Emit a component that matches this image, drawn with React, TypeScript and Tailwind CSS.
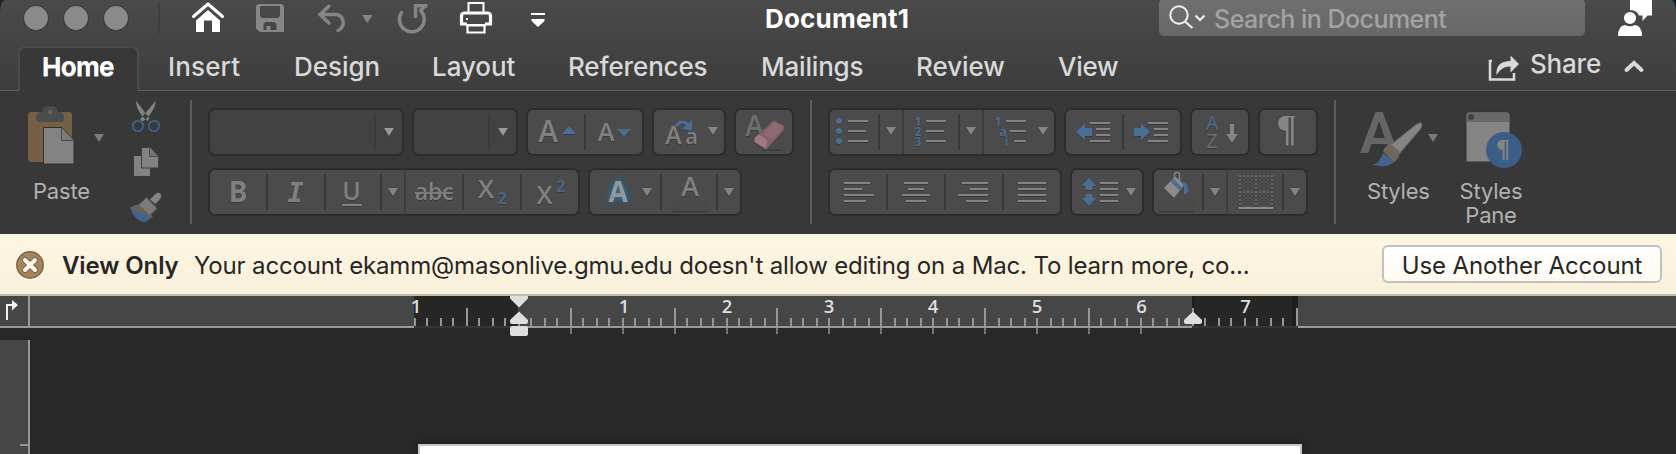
import React, { Fragment, type ReactNode } from "react";

/* Every icon is drawn in window coordinates: the viewBox is the icon's own rectangle. */
function Ico({ x, y, w, h, c = "", children }: { x: number; y: number; w: number; h: number; c?: string; children?: ReactNode }) {
  return (
    <svg width={w} height={h} viewBox={`${x} ${y} ${w} ${h}`} className={`block shrink-0 overflow-visible ${c}`} aria-hidden="true">
      {children}
    </svg>
  );
}

const Tri = ({ x, y = 131, f = "#858585" }: { x: number; y?: number; f?: string }) => (
  <path d={`M${x - 5} ${y - 4}h10l-5 8z`} fill={f} />
);

const Lines = ({ l }: { l: [number, number, number][] }) => (
  <path d={l.map(([a, b, y]) => `M${a} ${y}H${b}`).join("")} stroke="#838383" strokeWidth="2" />
);

type GlyphProps = { x: number; y: number; s: number; children: string; f?: string; w?: number; family?: string; i?: boolean };
const Glyph = ({ x, y, s, children, f = "#808080", w = 600, family = '"Open Sans", "Noto Sans", sans-serif', i }: GlyphProps) => (
  <text x={x} y={y} fontSize={s} fill={f} fontWeight={w} fontFamily={family} textAnchor="middle" fontStyle={i ? "italic" : "normal"}>
    {children}
  </text>
);

type CellDef = { w: number; sep?: "short" | "full"; art?: ReactNode };

function Group({ x, y, cells, field = false }: { x: number; y: number; cells: CellDef[]; field?: boolean }) {
  let cursor = x;
  return (
    <div className={`flex h-12 items-center rounded-[7px] border-2 border-[#2d2d2d] ${field ? "bg-[#424242]" : "bg-[#4b4b4b]"}`}>
      {cells.map((cell, i) => {
        const at = cursor;
        cursor += cell.w;
        return (
          <Fragment key={i}>
            <Ico x={at} y={y} w={cell.sep ? cell.w - 2 : cell.w} h={44} c="drop-shadow-[0_1px_0_rgba(0,0,0,0.22)]">
              {cell.art}
            </Ico>
            {cell.sep === "short" && <div className="h-9 w-0.5 bg-[#3a3a3a]" />}
            {cell.sep === "full" && <div className="h-11 w-0.5 bg-[#3d3d3d]" />}
          </Fragment>
        );
      })}
    </div>
  );
}

const BLUE = "#4a6d93";
const R1 = 110;
const R2 = 170;
const Divider = () => <div className="mt-[9px] h-[124px] w-0.5 shrink-0 bg-[#5e5e5e]" />;

function TitleBar() {
  return (
    <div className="flex h-[46px] items-start">
      <Ico x={0} y={0} w={160} h={46}>
        {[36, 76, 116].map((cx) => (
          <circle key={cx} cx={cx} cy="18" r="12.5" fill="#8a8a8a" stroke="#3b3b3b" strokeWidth="1.2" />
        ))}
        <path d="M159 2v32" stroke="#3d3d3d" strokeWidth="1.5" />
      </Ico>
      <Ico x={160} y={0} w={400} h={46}>
        <path d="M193.500 16.500L208 4l14.500 12.500" fill="none" stroke="#fff" strokeWidth="3" strokeLinecap="round" strokeLinejoin="round" />
        <path d="M196 20.500L208 10l12 10.500V32h-8V20.500h-8V32h-8z" fill="#fff" />
        <path d="M258 4H282l2 2V32H260l-4-3.500V6z M260 6v10l2 2h16l2-2V6z M265.500 22l-2 2v6h3v-4h4v4h6v-6l-2-2z" fill="#868686" fillRule="evenodd" />
        <path d="M329 6L320 14.500 329 23M320 14.500h17a8.500 8.500 0 0 1 1 16" fill="none" stroke="#858585" strokeWidth="3.500" strokeLinecap="round" />
        <path d="M362 15h10.500l-5.250 8z" fill="#858585" />
        <path d="M401.500 12.500a12.400 12.400 0 1 0 19-2L424.500 6.500" fill="none" stroke="#858585" strokeWidth="3.500" strokeLinecap="round" strokeLinejoin="round" />
        <path d="M415.500 18V5.800H427.500" fill="none" stroke="#858585" strokeWidth="3.400" />
        <g fill="none" stroke="#fff">
          <path d="M468.500 13V3h15v10" strokeWidth="2" />
          <path d="M467 24h-5.500V16q0-3 3-3h23q3 0 3 3v8H485" strokeWidth="3.200" />
          <path d="M467.500 25h17v7.500h-17zM466 25.500h20" strokeWidth="2.200" />
        </g>
        <path d="M466 18h2v2h-2z" fill="#fff" />
        <path d="M531 13h14v2h-14zM531.500 19h13v2l-6.500 6-6.500-6z" fill="#fff" />
      </Ico>
      <div className="ml-[205px] w-[150px] whitespace-nowrap pt-[3px] text-[26px] font-bold leading-8 tracking-[0.200px] text-white">Document1</div>
      <div className="ml-[244px] flex h-9 w-[426px] items-center rounded-b-[5px] rounded-t-[3px] bg-gradient-to-b from-[#6f6f6f] to-[#676767]">
        <Ico x={1159} y={0} w={55} h={36}>
          <circle cx="1179" cy="15" r="8.700" fill="none" stroke="#f2f2f2" strokeWidth="2" />
          <path d="M1185 21.500l7.500 6.500" stroke="#f2f2f2" strokeWidth="2.200" />
          <path d="M1195.500 15.500l4.500 4.500 4.500-4.500" fill="none" stroke="#f2f2f2" strokeWidth="2.200" />
        </Ico>
        <span className="whitespace-nowrap pt-[4px] text-[25px] font-medium tracking-[-0.520px] text-[#a3a3a3]">Search in Document</span>
      </div>
      <Ico x={1585} y={0} w={91} h={46}>
        <path d="M1630 0h22v15.500h-4.500l-5 5.500v-5.500h-3.500a8 8 0 0 0-9-5z" fill="#fff" />
        <circle cx="1630" cy="18" r="6.800" fill="#fff" stroke="#484848" strokeWidth="1.500" />
        <path d="M1618 36q0-10 7-11 5 2.500 10 0 7 1 7 11z" fill="#fff" />
      </Ico>
    </div>
  );
}

function TabBar() {
  const tabs: [string, string][] = [
    ["Insert", "w-[126px] tracking-[0.150px]"],
    ["Design", "w-[138px] tracking-[-0.050px]"],
    ["Layout", "w-[136px] tracking-[-0.050px]"],
    ["References", "w-[193px] tracking-[-0.150px]"],
    ["Mailings", "w-[155px] tracking-[-0.200px]"],
    ["Review", "w-[142px] tracking-[-0.050px]"],
    ["View", "w-[99px] tracking-[-0.300px]"],
  ];
  return (
    <div className="flex h-[45px] text-[26px] font-medium leading-[42px] text-[#d9d9d9]">
      <div className="w-[18px] border-b border-[#606060]" />
      <div className="w-[121px] rounded-t-[7px] border-2 border-b-0 border-[#4b4b4b] bg-[#383838] pl-[22px] font-bold leading-[38px] tracking-[-0.700px] text-white [text-shadow:0_1px_0_#999]">
        Home
      </div>
      <div className="flex flex-1 whitespace-nowrap border-b border-[#606060] pl-[29px]">
        {tabs.map(([name, cls]) => (
          <div key={name} className={`shrink-0 ${cls}`}>{name}</div>
        ))}
        <Ico x={1157} y={46} w={373} h={44}>
          <path d="M1492 61h-2v18.500h24V73" fill="none" stroke="#dadada" strokeWidth="2.500" />
          <path d="M1496.500 75q-1-14 14-14v-5.500l8.500 8.500-8.500 8.500v-6q-9-.5-14 8.500z" fill="#dadada" />
        </Ico>
        <div className="w-[90px] leading-[36px] tracking-[-0.200px]">Share</div>
        <Ico x={1620} y={46} w={30} h={44}>
          <path d="M1626.500 70l7.500-7 7.500 7" fill="none" stroke="#d9d9d9" strokeWidth="4" strokeLinecap="round" />
        </Ico>
      </div>
    </div>
  );
}

function Ribbon() {
  return (
    <div className="flex h-[143px] bg-[#383838] text-[22px] leading-6 tracking-[-0.200px] text-[#b2b2b2]">
      <div className="flex w-[126px] flex-col">
        <Ico x={0} y={91} w={126} h={88}>
          <rect x="28" y="112" width="44" height="50" rx="3" fill="#755f45" />
          <path d="M36 118q0-6 5-6 2 0 2-3 2-3 7-3t7 3q0 3 2 3 5 0 5 6 0 4-3 4H39q-3 0-3-4z" fill="#4a4c4e" />
          <circle cx="50" cy="112" r="2.300" fill="#755f45" />
          <path d="M43.500 127.500H62l12 13V164H43.500z" fill="#838383" stroke="#303030" />
          <path d="M61.500 128v12.500H74" fill="#7b7b7b" stroke="#4b4b4b" />
          <Tri x={99} y={138} f="#7b7b7b" />
        </Ico>
        <span className="pl-[33px]">Paste</span>
      </div>
      <div className="w-[64px]">
        <Ico x={126} y={91} w={64} h={48}>
          <path d="M136 100.500l13.500 18-2 2.500-4.500-4q-7-8-7-16.500zM156 100.500l-16 19 3 2 5-4.500q7-8 8-16.500z" fill="#838383" />
          <circle cx="138" cy="126" r="5.200" fill="none" stroke="#3d5e88" strokeWidth="2" />
          <circle cx="154" cy="126" r="5.200" fill="none" stroke="#3d5e88" strokeWidth="2" />
        </Ico>
        <Ico x={126} y={139} w={64} h={48}>
          <path d="M134 156h16v20h-16z" fill="#828282" />
          <path d="M141.500 147.500h9l8 9V168h-17z" fill="#828282" stroke="#3e3e3e" />
          <path d="M149.500 148v8.500h8.500" fill="#757575" stroke="#4b4b4b" />
        </Ico>
        <Ico x={126} y={187} w={64} h={42}>
          <path d="M130 207.500l10-4 13 13-7.500 5.500q-10 0-15.500-14.500z" fill="#6d6157" />
          <path d="M130 207.500q6 5 16 7l3.500 4.500-5 3q-10-1-14.500-14.500z" fill="#3f638f" />
          <path d="M138.500 205l8-7.500 10.500 11-7.500 7z" fill="#7b7b7b" stroke="#5b5b5b" />
          <path d="M150 199.500l6-6q3-1.500 4.500.5t0 4.500l-5 5.500z" fill="#858585" />
        </Ico>
      </div>
      <Divider />
      <div className="ml-4 flex flex-col gap-3 pt-[17px]">
        <div className="flex gap-2">
          <Group field x={210} y={R1} cells={[{ w: 166, sep: "short" }, { w: 26, art: <Tri x={389} y={132} f="#9a9a9a" /> }]} />
          <Group field x={414} y={R1} cells={[{ w: 76, sep: "short" }, { w: 26, art: <Tri x={503} y={132} f="#9a9a9a" /> }]} />
          <Group x={528} y={R1} cells={[
            { w: 58, sep: "short", art: <><Glyph x={548} y={142} s={30}>A</Glyph><path d="M562 134l7-8 7 8z" fill={BLUE} /></> },
            { w: 56, art: <><Glyph x={606} y={141} s={25.500}>A</Glyph><path d="M617 129h14l-7 8z" fill={BLUE} /></> },
          ]} />
          <Group x={654} y={R1} cells={[
            { w: 70, art: <>
              <Glyph x={673.500} y={144} s={25}>A</Glyph><Glyph x={691.500} y={144} s={22}>a</Glyph>
              <path d="M676 126.500q7-8.500 12.500-.5" fill="none" stroke={BLUE} strokeWidth="3.200" />
              <path d="M692 120v11l-10-2z" fill={BLUE} /><Tri x={713} />
            </> },
          ]} />
          <Group x={736} y={R1} cells={[
            { w: 56, art: <>
              <Glyph x={754.500} y={135.500} s={28} f="#6f6f6c">A</Glyph>
              <path d="M762 149.500h19" stroke="#414141" strokeWidth="1" />
              <path d="M773.500 120.500l10.500 5.500v4L766.500 149.500l-12.500-7.500 1-4z" fill="#875f67" stroke="#70545a" />
              <path d="M774 121.500l9.500 5-11 14-9-6.500z" fill="#8b6a70" />
              <path d="M755 138l3.500-3.500 9 6-2 8-11-7z" fill="#9a7b80" />
            </> },
          ]} />
        </div>
        <div className="flex gap-2">
          <Group x={210} y={R2} cells={[
            { w: 58, sep: "short", art: <Glyph x={238} y={202} s={28} w={700}>B</Glyph> },
            { w: 58, sep: "short", art: <Glyph x={295.500} y={202} s={27} w={700} i family='"DejaVu Sans Mono", monospace'>I</Glyph> },
            { w: 56, sep: "short", art: <><Glyph x={351.500} y={200} s={25}>U</Glyph><path d="M342 205h20" stroke="#838383" strokeWidth="2" /></> },
            { w: 24, sep: "full", art: <Tri x={393} y={192} /> },
            { w: 58, sep: "short", art: <><Glyph x={434} y={200} s={23}>abc</Glyph><path d="M415 193h38" stroke="#7b7b7b" strokeWidth="2" /></> },
            { w: 58, sep: "short", art: <><Glyph x={486} y={198} s={26}>X</Glyph><Glyph x={502} y={204} s={16.500} f="#4b6586" w={700}>2</Glyph></> },
            { w: 56, art: <><Glyph x={544.500} y={204} s={26}>X</Glyph><Glyph x={560.500} y={192} s={16.500} f="#4b6586" w={700}>2</Glyph></> },
          ]} />
          <Group x={590} y={R2} cells={[
            { w: 72, sep: "short", art: <>
              <g className="drop-shadow-[0_0_3px_#2f6d9c]"><g className="drop-shadow-[0_0_2px_#2f6d9c]">
                <Glyph x={618} y={202} s={28} w={700} f="#979797">A</Glyph></g></g>
              <Tri x={647} y={192} />
            </> },
            { w: 56, sep: "short", art: <>
              <Glyph x={690} y={196} s={27}>A</Glyph>
              <rect x="672.500" y="201.500" width="35" height="9.500" rx="1" fill="#4a4a4a" stroke="#464646" />
            </> },
            { w: 22, art: <Tri x={729} y={192} /> },
          ]} />
        </div>
      </div>
      <div className="w-[16px]" />
      <Divider />
      <div className="ml-4 flex flex-col gap-3 pt-[17px]">
        <div className="flex gap-2">
          <Group x={830} y={R1} cells={[
            { w: 50, sep: "short", art: <>
              {[121, 131, 141].map((y) => <circle key={y} cx="839" cy={y} r="3" fill={BLUE} />)}
              <Lines l={[[848, 868, 121], [848, 866, 131], [848, 868, 141]]} />
            </> },
            { w: 24, sep: "full", art: <Tri x={891} /> },
            { w: 56, sep: "short", art: <>
              <Glyph x={918} y={126} s={11.500} f={BLUE} w={700}>1</Glyph>
              <Glyph x={918} y={136} s={11.500} f={BLUE} w={700}>2</Glyph>
              <Glyph x={918} y={146} s={11.500} f={BLUE} w={700}>3</Glyph>
              <Lines l={[[926, 946, 121], [926, 944, 131], [926, 946, 141]]} />
            </> },
            { w: 24, sep: "full", art: <Tri x={971} /> },
            { w: 70, art: <>
              <Glyph x={998} y={126} s={11.500} f={BLUE} w={700}>1</Glyph>
              <Glyph x={1003} y={136} s={13} f={BLUE} w={700}>a</Glyph>
              <Glyph x={1006.500} y={146} s={12} f={BLUE} w={700}>i</Glyph>
              <Lines l={[[1006, 1026, 121], [1010, 1026, 131], [1014, 1026, 141]]} />
              <Tri x={1043} />
            </> },
          ]} />
          <Group x={1066} y={R1} cells={[
            { w: 58, sep: "short", art: <>
              <path d="M1076 132l9-8.500v4.500h7v8h-7v4.500z" fill={BLUE} />
              <Lines l={[[1090, 1110, 123], [1096, 1110, 129], [1096, 1110, 135], [1090, 1110, 141]]} />
            </> },
            { w: 56, art: <>
              <path d="M1150 132l-9-8.500v4.500h-7v8h7v4.500z" fill={BLUE} />
              <Lines l={[[1148, 1168, 123], [1154, 1168, 129], [1154, 1168, 135], [1148, 1168, 141]]} />
            </> },
          ]} />
          <Group x={1192} y={R1} cells={[
            { w: 56, art: <>
              <Glyph x={1212} y={130} s={19.500} f={BLUE} w={500}>A</Glyph>
              <Glyph x={1212} y={148} s={19.500} f="#707070" w={500}>Z</Glyph>
              <path d="M1230 124h4v10h4l-6 9-6-9h4z" fill="#858585" />
            </> },
          ]} />
          <Group x={1260} y={R1} cells={[{ w: 56, art: <Glyph x={1286.500} y={141} s={38} w={700} f="#858585" family='"Liberation Serif", serif'>¶</Glyph> }]} />
        </div>
        <div className="flex gap-2">
          <Group x={830} y={R2} cells={[
            { w: 58, sep: "short", art: <Lines l={[[844, 870, 183], [844, 862, 189], [844, 874, 195], [844, 866, 201]]} /> },
            { w: 58, sep: "short", art: <Lines l={[[904, 928, 183], [908, 924, 189], [902, 930, 195], [906, 926, 201]]} /> },
            { w: 58, sep: "short", art: <Lines l={[[962, 988, 183], [970, 988, 189], [958, 988, 195], [966, 988, 201]]} /> },
            { w: 56, art: <Lines l={[[1018, 1046, 183], [1018, 1046, 189], [1018, 1046, 195], [1018, 1046, 201]]} /> },
          ]} />
          <Group x={1072} y={R2} cells={[
            { w: 70, art: <>
              <path d="M1089 178l7.500 8h-4v4h-7v-4h-4zM1089 206l7.500-8h-4v-4h-7v4h-4z" fill={BLUE} />
              <Lines l={[[1100, 1118, 183], [1100, 1118, 189], [1100, 1118, 195], [1100, 1118, 201]]} />
              <Tri x={1131} y={192} />
            </> },
          ]} />
          <Group x={1154} y={R2} cells={[
            { w: 50, sep: "short", art: <>
              <path d="M1164 188l11-11.500 9.500 8.500-10.500 13z" fill="#8b8b8b" />
              <path d="M1174.500 179v-4q0-2.500 2.500-2.500t2.500 2.500v6" fill="none" stroke="#858585" strokeWidth="1.500" />
              <path d="M1170.500 181.500l3-3 8.500 9-2.500 3z" fill={BLUE} />
              <path d="M1181 182q6-.5 7 5v5q-1 3-4 2.500v-8z" fill={BLUE} />
              <rect x="1158.500" y="201.500" width="35" height="9.500" rx="1" fill="#4a4a4a" stroke="#464646" />
            </> },
            { w: 24, sep: "full", art: <Tri x={1215} y={192} /> },
            { w: 56, sep: "short", art: <>
              <path d="M1239 176H1273M1239 192H1273M1240 179V206M1256 179V206M1272 179V206" stroke="#656565" strokeWidth="2" strokeDasharray="2 2" />
              <path d="M1239 208H1273" stroke="#8b8b8b" strokeWidth="2" />
            </> },
            { w: 22, art: <Tri x={1295} y={192} /> },
          ]} />
        </div>
      </div>
      <div className="w-[16px]" />
      <Divider />
      <div className="flex w-[110px] flex-col">
        <Ico x={1336} y={91} w={110} h={88}>
          <Glyph x={1379} y={152.500} s={58} f="#656563" w={600} family='Roboto, "Liberation Sans", sans-serif'>A</Glyph>
          <path d="M1421 123q2 2-1 6.500L1399 154l-9.500-8L1415 125.500q5-3.500 6-2.500z" fill="#858585" stroke="#6b6b6b" />
          <path d="M1383 151q3-7 9-5.500l7 5q2 6-5 12z" fill="#73675c" />
          <path d="M1372 164.500q6 0 8.500-6.500l3-5 11 9q-9 7-22.500 2.500z" fill="#42648d" />
          <Tri x={1433} y={138} f="#7b7b7b" />
        </Ico>
        <span className="pl-[31px]">Styles</span>
      </div>
      <div className="flex w-[90px] flex-col">
        <Ico x={1446} y={91} w={90} h={88}>
          <path d="M1466 162V115q0-3 3-3h38q3 0 3 3v47z" fill="#858585" stroke="#303030" />
          <path d="M1466.500 122V115q0-2.500 2.500-2.500h38q2.500 0 2.500 2.500v7z" fill="#686868" />
          <circle cx="1471" cy="117" r="3" fill="#414141" />
          <circle cx="1504" cy="150" r="18" fill="#3c5d85" />
          <Glyph x={1503} y={157} s={26} w={700} f="#858585" family='"Liberation Serif", serif'>¶</Glyph>
        </Ico>
        <span className="text-center">Styles<br />Pane</span>
      </div>
    </div>
  );
}

function Banner() {
  return (
    <div className="flex h-[62px] items-center whitespace-nowrap border-b-2 border-[#bfbda5] bg-gradient-to-b from-[#fff6e1] to-[#f9f0db] text-[24px] text-[#262626]">
      <Ico x={0} y={234} w={62} h={60}>
        <circle cx="30" cy="266.500" r="13.500" fill="#fff" />
        <circle cx="30" cy="265" r="13.200" fill="#a18460" stroke="#80643f" strokeWidth="1.500" />
        <path d="M25 260l10 10M35 260l-10 10" stroke="#80643f" strokeWidth="6" strokeLinecap="round" />
        <path d="M25 260l10 10M35 260l-10 10" stroke="#fffaf0" strokeWidth="4" strokeLinecap="round" />
      </Ico>
      <span className="w-[132px] pt-[3px] font-semibold tracking-[-0.100px]">View Only</span>
      <span className="w-[1188px] pt-[3px] tracking-[-0.150px]">Your account ekamm@masonlive.gmu.edu doesn't allow editing on a Mac. To learn more, co...</span>
      <button className="h-[38px] w-[280px] rounded-[6px] border-2 border-[#c1c1c1] bg-gradient-to-b from-white to-[#fffaf0] pt-[3px] leading-[31px] tracking-[-0.120px]">Use Another Account</button>
    </div>
  );
}

function Ruler() {
  const ticks = Array.from({ length: 69 }, (_, i) => ({ i, x: 2 * Math.round((414 + 12.96 * i) / 2) }));
  const inchCentres = [624, 727, 829, 933, 1037, 1141.5, 1245.5];
  return (
    <div className="flex h-[44px] bg-[#282828]">
      <Ico x={0} y={296} w={1676} h={44}>
        <path d="M0 296H1676V326H0z" fill="#464646" />
        <path d="M414 296H518V328H414zM1192 296H1298V328H1192z" fill="#262626" />
        <path d="M1192 296h3v30h-3zM1292 296h6v30h-6z" fill="#1e1e1e" />
        <path d="M414 327H518M1192 327H1298" stroke="#363636" strokeWidth="2" />
        <path d="M0 327H414M518 327H1192M1298 327H1676M29 296V327" stroke="#989898" strokeWidth="2" />
        {ticks.map(({ i, x }) => {
          const half = i % 8 === 4;
          const whole = i % 8 === 0;
          return (
            <Fragment key={i}>
              <rect x={x} y={half ? 308 : 318} width="2" height={half ? 18 : 8} fill="#97979b" />
              {(half || whole) && i > 8 && i < 60 && <rect x={x} y="328" width="2" height="6" fill="#77777a" />}
            </Fragment>
          );
        })}
        {inchCentres.map((cx, n) => (
          <Glyph key={n} x={cx} y={312.500} s={18.500} f="#dedede">{String(n + 1)}</Glyph>
        ))}
        <Glyph x={416} y={312.500} s={18.500} f="#dedede">1</Glyph>
        <path d="M510 296h18v2.500l-9 9-9-9zM519 311.500l9 8.500v2q0 2-2 2h-14q-2 0-2-2v-2z" fill="#dedede" />
        <rect x="510" y="326" width="18" height="10" rx="2" fill="#dedede" />
        <path d="M1193 311.500l9 8.500v2q0 2-2 2h-14q-2 0-2-2v-2z" fill="#dedede" />
        <path d="M7 320V305h7" fill="none" stroke="#f1f1f1" strokeWidth="2" />
        <path d="M12 300l6 5-6 5.500z" fill="#f1f1f1" />
      </Ico>
    </div>
  );
}

export default function App() {
  return (
    <div className="flex h-[454px] w-[1676px] flex-col overflow-hidden bg-[#14202b] font-['Inter','Liberation_Sans',sans-serif]">
      <header className="bg-gradient-to-b from-[#4a4a4a] to-[#3d3d3d] [border-top-left-radius:5px_12px] [border-top-right-radius:5px_12px]">
        <TitleBar />
        <TabBar />
      </header>
      <Ribbon />
      <Banner />
      <Ruler />
      <main className="flex flex-1 bg-[#282828]">
        <div className="flex w-[30px] justify-end border-r-2 border-[#989898] bg-[#464646] pt-[104px]">
          <div className="h-0.5 w-2 bg-[#989898]" />
        </div>
        <div className="ml-[388px] mt-[104px] h-[10px] w-[884px] border-2 border-b-0 border-[#c6c6c6] bg-white shadow-[0_0_8px_rgba(0,0,0,0.35)]" />
      </main>
    </div>
  );
}
